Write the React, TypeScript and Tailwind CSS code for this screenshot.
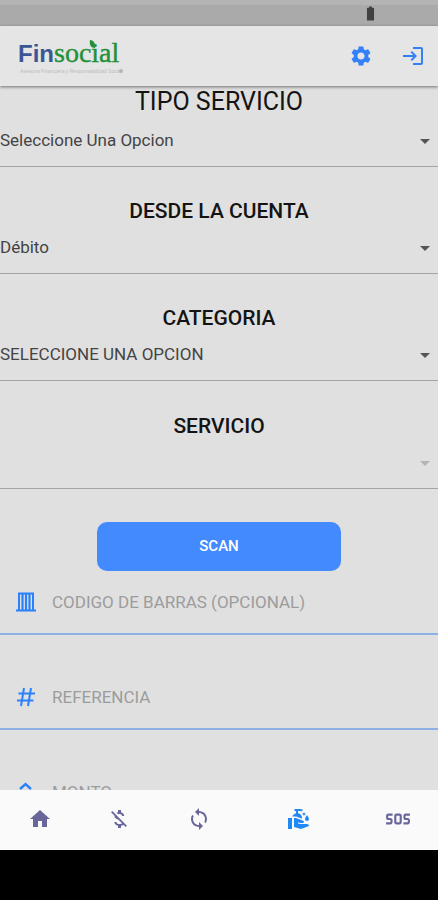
import React from "react";
import {
  MdBatteryFull,
  MdCleanHands,
  MdHome,
  MdLogin,
  MdMoneyOff,
  MdSettings,
  MdSos,
  MdSync,
} from "react-icons/md";

type SelectFieldProps = {
  id: string;
  label: string;
  options: string[];
  labelClass?: string;
  disabled?: boolean;
};

function SelectField({
  id,
  label,
  options,
  labelClass = "mt-8 h-6 text-[21px] leading-6 font-medium",
  disabled = false,
}: SelectFieldProps) {
  return (
    <div className="flex flex-col">
      <label htmlFor={id} className={`text-center text-[#141414] ${labelClass}`}>
        {label}
      </label>
      <div className="grid items-center border-b border-[#a4a4a4]">
        <select
          id={id}
          name={id}
          disabled={disabled}
          className="col-start-1 row-start-1 h-[50px] w-full appearance-none bg-transparent text-[17px] text-[#444] outline-none"
        >
          {options.map((option) => (
            <option key={option}>{option}</option>
          ))}
        </select>
        <svg
          viewBox="0 0 10 5"
          className={`pointer-events-none col-start-1 row-start-1 mr-2 h-[5px] w-[10px] justify-self-end ${
            disabled ? "fill-[#b4b4b4]" : "fill-[#555]"
          }`}
        >
          <path d="M0 0h10L5 5z" />
        </svg>
      </div>
    </div>
  );
}

type TextFieldProps = {
  id: string;
  placeholder: string;
  icon: React.ReactNode;
};

function TextField({ id, placeholder, icon }: TextFieldProps) {
  return (
    <div className="flex shrink-0 items-center border-b-2 border-[#8fb0e6] pl-4">
      <label htmlFor={id} aria-label={placeholder} className="w-9 text-[#2b80fb]">
        {icon}
      </label>
      <input
        id={id}
        name={id}
        type="text"
        placeholder={placeholder}
        className="h-[62px] min-w-0 flex-1 bg-transparent text-[17px] text-[#444] outline-none placeholder:text-[#9c9c9c]"
      />
    </div>
  );
}

function Logo() {
  return (
    <svg viewBox="0 0 110 42" className="h-[42px] w-[110px]" role="img" aria-label="Finsocial">
      <text
        x="0"
        y="27"
        fill="#3a5795"
        className="font-['Liberation_Sans',sans-serif] text-[24px] font-bold"
      >
        Fin
      </text>
      <text
        x="36"
        y="27"
        fill="#249038"
        stroke="#249038"
        strokeWidth="0.4"
        className="font-['Liberation_Serif',serif] text-[28px]"
      >
        social
      </text>
      <path d="M72 5c3 0 6 3 5 8-4 0-6-3-5-8z" fill="#249038" />
      <text
        x="2"
        y="38"
        fill="#b9bcb9"
        className="font-['Liberation_Sans',sans-serif] text-[5px]"
      >
        Asesoría Financiera y Responsabilidad Social
      </text>
      <circle cx="103" cy="36" r="2" fill="#b4b8b4" />
    </svg>
  );
}

function BarcodeIcon() {
  return (
    <svg viewBox="0 0 20 20" className="h-5 w-5" fill="none" stroke="currentColor">
      <path d="M2 1.5h16M0 18.5h20" strokeWidth="2" />
      <path d="M3 1v17M17 1v17" strokeWidth="2" />
      <path d="M6.5 1v17M10 1v17M13.5 1v17" strokeWidth="2.2" />
    </svg>
  );
}

function HashIcon() {
  return (
    <svg viewBox="0 0 20 20" className="h-5 w-5" fill="none" stroke="currentColor" strokeWidth="2">
      <path d="M8 1L5 19M15 1l-3 18M2.5 6.5H19M1 13.5h16.5" />
    </svg>
  );
}

function AmountIcon() {
  return (
    <svg viewBox="0 0 20 20" className="h-5 w-5" fill="none" stroke="currentColor" strokeWidth="2.4">
      <path d="M4 7l5.500-5L15 7M4 13l5.500 5 5.500-5" />
    </svg>
  );
}

export default function App() {
  return (
    <div className="flex h-screen flex-col bg-[#e0e0e0] font-[Roboto,sans-serif]">
      <div className="flex h-[26px] shrink-0 items-end justify-end border-t-[5px] border-[#b4b4b4] bg-[#aaa] pr-[59px] pb-1">
        <MdBatteryFull className="h-[17px] w-[17px] text-[#404040]" />
      </div>

      <header className="z-10 flex h-[60px] shrink-0 items-center justify-between bg-[#e5e5e5] pr-[13px] pl-[18px] shadow-[0_1px_3px_rgba(0,0,0,0.5)]">
        <Logo />
        <div className="flex items-center gap-7 text-[#3380f8]">
          <button type="button" aria-label="Ajustes">
            <MdSettings className="h-6 w-6" />
          </button>
          <button type="button" aria-label="Salir">
            <MdLogin className="h-6 w-6" />
          </button>
        </div>
      </header>

      <main className="min-h-0 flex-1 overflow-hidden pt-px">
        <form className="flex flex-col">
          <SelectField
            id="tipoServicio"
            label="TIPO SERVICIO"
            options={["Seleccione Una Opcion"]}
            labelClass="h-[29px] text-[25px] leading-[29px]"
          />
          <SelectField id="cuenta" label="DESDE LA CUENTA" options={["Débito"]} />
          <SelectField
            id="categoria"
            label="CATEGORIA"
            options={["SELECCIONE UNA OPCION"]}
          />
          <SelectField
            id="servicio"
            label="SERVICIO"
            options={[]}
            labelClass="mt-[33px] h-6 text-[21px] leading-6 font-medium"
            disabled
          />

          <button
            type="button"
            className="mt-[33px] h-[49px] w-[244px] self-center rounded-[10px] bg-[#448aff] text-[15px] font-medium text-white"
          >
            SCAN
          </button>

          <div className="flex flex-col gap-[31px]">
            <TextField
              id="codigoBarras"
              placeholder="CODIGO DE BARRAS (OPCIONAL)"
              icon={<BarcodeIcon />}
            />
            <TextField id="referencia" placeholder="REFERENCIA" icon={<HashIcon />} />
            <TextField id="monto" placeholder="MONTO" icon={<AmountIcon />} />
          </div>
        </form>
      </main>

      <nav className="grid h-[60px] shrink-0 grid-cols-[4fr_4fr_4fr_6fr_4fr] place-items-center bg-[#fafafa] pb-0.5 text-[#69679a]">
        <button type="button" aria-label="Inicio">
          <MdHome className="h-6 w-6" />
        </button>
        <button type="button" aria-label="Créditos">
          <MdMoneyOff className="h-6 w-6" />
        </button>
        <button type="button" aria-label="Movimientos">
          <MdSync className="h-6 w-6" />
        </button>
        <button type="button" aria-label="Servicios" className="text-[#2189f5]">
          <MdCleanHands className="h-6 w-6" />
        </button>
        <button type="button" aria-label="SOS">
          <MdSos className="h-[26px] w-[26px]" />
        </button>
      </nav>
      <div className="h-[50px] shrink-0 bg-black" />
    </div>
  );
}
